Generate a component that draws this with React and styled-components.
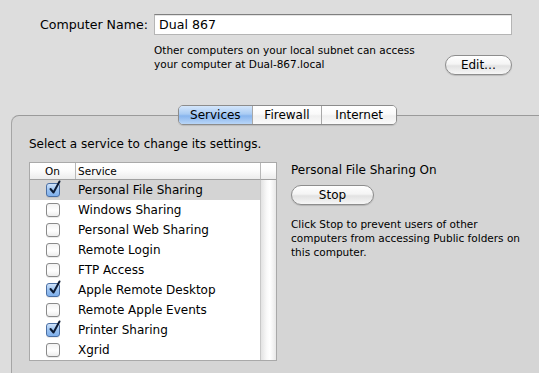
import React from "react";
import styled, { createGlobalStyle } from "styled-components";

const GlobalStyle = createGlobalStyle`
  html, body {
    margin: 0;
    padding: 0;
    background: #dddddd;
    overflow: hidden;
  }
  body {
    font-family: "DejaVu Sans", "Lucida Grande", sans-serif;
    color: #000;
  }
`;

const Window = styled.div`
  width: 539px;
  height: 373px;
  overflow: hidden;
  background: #dddddd;
  display: flex;
  flex-direction: column;
`;

const NameSection = styled.section`
  padding: 14px 27px 0 0;
  display: grid;
  grid-template-columns: 154px 1fr;
  row-gap: 7px;
`;

const Label = styled.label`
  font-size: 12.6px;
  text-align: right;
  padding-right: 6px;
  line-height: 22px;
`;

const NameInput = styled.div`
  height: 21px;
  box-sizing: border-box;
  background: #fff;
  border: 1px solid #b5b5b5;
  border-top-color: #7f7f7f;
  box-shadow: inset 0 1px 0 #e4e4e4;
  font-size: 12.6px;
  line-height: 20px;
  padding-left: 4px;
`;

const InfoRow = styled.div`
  grid-column: 2;
  display: flex;
  justify-content: space-between;
  align-items: flex-start;
`;

const SmallText = styled.p`
  margin: ${(p) => p.$margin || "0"};
  font-size: 10.5px;
  line-height: 14px;
  width: ${(p) => p.$width || "auto"};
`;

const PillButton = styled.button`
  font-family: inherit;
  font-size: 12px;
  color: #000;
  height: 20px;
  width: ${(p) => p.$width};
  margin-top: ${(p) => p.$top || "0"};
  padding: 0;
  border-radius: 10px;
  border: 1px solid #8d8d8d;
  background: linear-gradient(#ffffff 0%, #f4f4f4 45%, #e2e2e2 55%, #f6f6f6 100%);
  box-shadow: 0 1px 1px rgba(0, 0, 0, 0.15);
`;

const Panel = styled.div`
  margin: 40px 0 0 11px;
  flex: 1;
  border-top: 1px solid #9a9a9a;
  border-left: 1px solid #a5a5a5;
  border-top-left-radius: 8px;
  background: #d5d5d5;
  margin-right: -20px;
`;

const Tabs = styled.div`
  display: flex;
  margin: -11px 0 0 166px;
  width: 219px;
  height: 20px;
  box-sizing: border-box;
  border: 1px solid #8c8c8c;
  border-radius: 5px;
  overflow: hidden;
  box-shadow: 0 1px 1px rgba(0, 0, 0, 0.12);
`;

const Tab = styled.div`
  width: ${(p) => p.$w}px;
  text-align: center;
  font-size: 12px;
  line-height: 18px;
  border-left: ${(p) => (p.$first ? "none" : "1px solid #a8a8a8")};
  background: ${(p) =>
    p.$active
      ? "linear-gradient(#d4e6fb 0%, #a9cbf3 45%, #88b5ee 55%, #b9d6f8 100%)"
      : "linear-gradient(#ffffff 0%, #fafafa 45%, #efefef 55%, #fbfbfb 100%)"};
`;

const PanelBody = styled.div`
  padding: 11px 0 0 17px;
`;

const Prompt = styled.div`
  font-size: 12px;
  line-height: 16px;
  margin-bottom: 10px;
`;

const Columns = styled.div`
  display: flex;
  gap: 14px;
`;

const ListBox = styled.div`
  width: 248px;
  box-sizing: border-box;
  border: 1px solid #a9a9a9;
  display: grid;
  grid-template-columns: 1fr 16px;
  background: #fff;
`;

const ListMain = styled.div`
  display: flex;
  flex-direction: column;
`;

const HeaderRow = styled.div`
  display: grid;
  grid-template-columns: 45px 1fr;
  height: 16px;
  border-bottom: 1px solid #a0a0a0;
  background: linear-gradient(#ffffff 0%, #fbfbfb 50%, #ececec 100%);
  font-size: 10.5px;
  line-height: 16px;
`;

const HeaderCell = styled.div`
  text-align: ${(p) => (p.$center ? "center" : "left")};
  padding-left: ${(p) => (p.$center ? "0" : "2px")};
  border-left: ${(p) => (p.$center ? "none" : "1px solid #b8b8b8")};
`;

const Corner = styled.div`
  height: 16px;
  border-left: 1px solid #b8b8b8;
  border-bottom: 1px solid #a0a0a0;
  background: linear-gradient(#ffffff 0%, #fbfbfb 50%, #ececec 100%);
`;

const Track = styled.div`
  border-left: 1px solid #c8c8c8;
  background: linear-gradient(90deg, #e3e3e3 0%, #fafafa 40%, #ffffff 60%, #e8e8e8 100%);
`;

const ScrollColumn = styled.div`
  display: flex;
  flex-direction: column;
  & > ${Track} {
    flex: 1;
  }
`;

const Row = styled.div`
  display: grid;
  grid-template-columns: 45px 1fr;
  align-items: center;
  height: 20px;
  background: ${(p) => (p.$selected ? "#d4d4d4" : "#fff")};
  font-size: 12px;
`;

const BoxCell = styled.div`
  display: flex;
  justify-content: center;
`;

const Name = styled.div`
  padding-left: 3px;
  white-space: nowrap;
`;

const Check = styled.span`
  display: block;
  width: 14px;
  height: 14px;
  box-sizing: border-box;
  border-radius: 3px;
  border: 1px solid ${(p) => (p.$on ? "#4a6ea3" : "#8a8a8a")};
  background: ${(p) =>
    p.$on
      ? "linear-gradient(#cfe3fb 0%, #9cc3f1 50%, #7fb0ec 100%)"
      : "linear-gradient(#f2f2f2 0%, #ffffff 55%, #ececec 100%)"};
  position: relative;
  box-shadow: 0 1px 0 rgba(0, 0, 0, 0.08);
`;

const Tick = styled.svg`
  position: absolute;
  left: 1px;
  top: -4px;
`;

const Detail = styled.div`
  padding-top: 0;
`;

const DetailTitle = styled.div`
  font-size: 12px;
  line-height: 16px;
  margin-top: 0;
  margin-bottom: 6px;
`;

const services = [
  ["Personal File Sharing", true, true],
  ["Windows Sharing", false],
  ["Personal Web Sharing", false],
  ["Remote Login", false],
  ["FTP Access", false],
  ["Apple Remote Desktop", true],
  ["Remote Apple Events", false],
  ["Printer Sharing", true],
  ["Xgrid", false],
];

function CheckBox({ on }) {
  return (
    <Check $on={on}>
      {on && (
        <Tick width="13" height="16" viewBox="0 0 13 16">
          <path d="M2.5 9 L5.5 12.5 L11.5 1.5" fill="none" stroke="#0c1a33" strokeWidth="2" strokeLinecap="round" strokeLinejoin="round" />
        </Tick>
      )}
    </Check>
  );
}

export default function App() {
  return (
    <Window>
      <GlobalStyle />
      <NameSection>
        <Label>Computer Name:</Label>
        <NameInput>Dual 867</NameInput>
        <InfoRow>
          <SmallText>
            Other computers on your local subnet can access
            <br />
            your computer at Dual-867.local
          </SmallText>
          <PillButton $width="67px" $top="12px">Edit…</PillButton>
        </InfoRow>
      </NameSection>
      <Panel>
        <Tabs>
          <Tab $w={74} $first $active>Services</Tab>
          <Tab $w={70}>Firewall</Tab>
          <Tab $w={75}>Internet</Tab>
        </Tabs>
        <PanelBody>
          <Prompt>Select a service to change its settings.</Prompt>
          <Columns>
            <ListBox>
              <ListMain>
                <HeaderRow>
                  <HeaderCell $center>On</HeaderCell>
                  <HeaderCell>Service</HeaderCell>
                </HeaderRow>
                {services.map(([name, on, selected]) => (
                  <Row key={name} $selected={selected}>
                    <BoxCell>
                      <CheckBox on={on} />
                    </BoxCell>
                    <Name>{name}</Name>
                  </Row>
                ))}
              </ListMain>
              <ScrollColumn>
                <Corner />
                <Track />
              </ScrollColumn>
            </ListBox>
            <Detail>
              <DetailTitle>Personal File Sharing On</DetailTitle>
              <PillButton $width="83px">Stop</PillButton>
              <SmallText $margin="12px 0 0 0" $width="240px">
                Click Stop to prevent users of other computers from accessing Public folders on this computer.
              </SmallText>
            </Detail>
          </Columns>
        </PanelBody>
      </Panel>
    </Window>
  );
}
